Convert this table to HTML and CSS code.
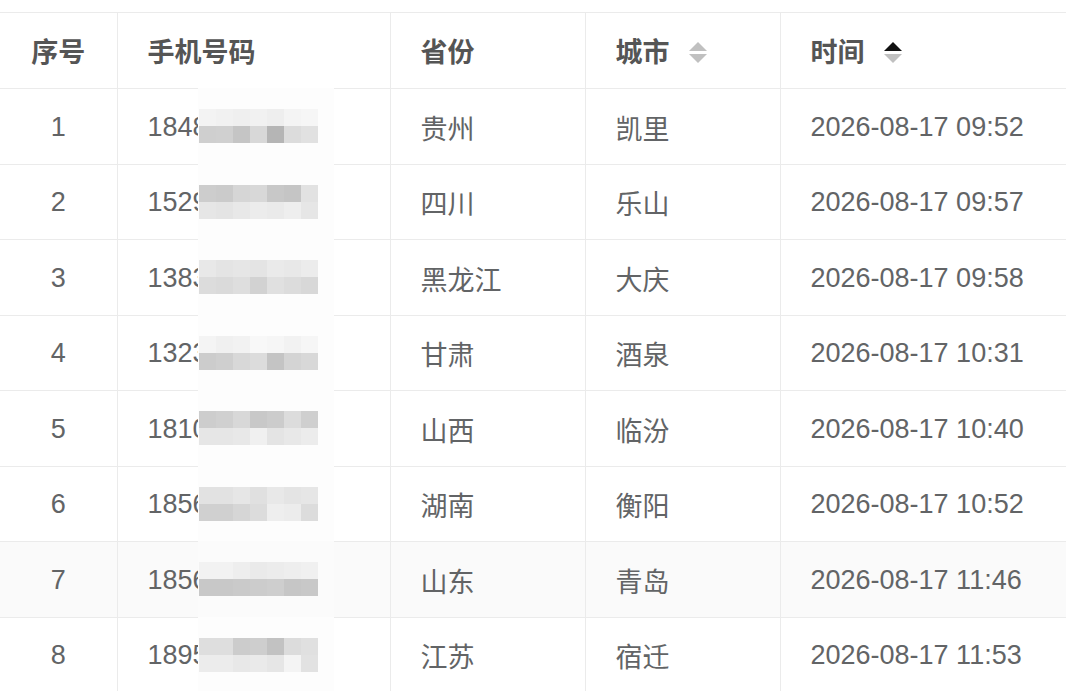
FILE: index.html
```html
<!DOCTYPE html>
<html lang="zh-CN">
<head>
<meta charset="utf-8">
<title>列表</title>
<link rel="stylesheet" href="styles.css">
</head>
<body>
<div class="wrap">
<table class="grid">
  <colgroup>
    <col class="c-idx"><col class="c-phone"><col class="c-prov"><col class="c-city"><col class="c-time">
  </colgroup>
  <thead>
    <tr>
      <th class="center">序号</th>
      <th>手机号码</th>
      <th>省份</th>
      <th>城市<span class="sort"><i class="up"></i><i class="down"></i></span></th>
      <th>时间<span class="sort asc"><i class="up"></i><i class="down"></i></span></th>
    </tr>
  </thead>
  <tbody>
    <tr>
      <td class="center">1</td>
      <td class="phone">1848<span class="mask"><span class="mos">
        <b style="background:#f3f3f3"></b><b style="background:#f1f1f1"></b><b style="background:#efefef"></b><b style="background:#f1f1f1"></b><b style="background:#eeeeee"></b><b style="background:#f4f4f4"></b><b style="background:#f6f6f6"></b>
        <b style="background:#cfcfcf"></b><b style="background:#d0d0d0"></b><b style="background:#c5c5c5"></b><b style="background:#d8d8d8"></b><b style="background:#b5b5b5"></b><b style="background:#dcdcdc"></b><b style="background:#e1e1e1"></b>
      </span></span></td>
      <td>贵州</td><td>凯里</td><td>2026-08-17 09:52</td>
    </tr>
    <tr>
      <td class="center">2</td>
      <td class="phone">1529<span class="mask"><span class="mos">
        <b style="background:#cdcdcd"></b><b style="background:#cbcbcb"></b><b style="background:#d6d6d6"></b><b style="background:#d8d8d8"></b><b style="background:#c8c8c8"></b><b style="background:#c5c5c5"></b><b style="background:#e2e2e2"></b>
        <b style="background:#e6e6e6"></b><b style="background:#e4e4e4"></b><b style="background:#e8e8e8"></b><b style="background:#ececec"></b><b style="background:#eaeaea"></b><b style="background:#eeeeee"></b><b style="background:#e6e6e6"></b>
      </span></span></td>
      <td>四川</td><td>乐山</td><td>2026-08-17 09:57</td>
    </tr>
    <tr>
      <td class="center">3</td>
      <td class="phone">1383<span class="mask"><span class="mos">
        <b style="background:#e8e8e8"></b><b style="background:#e4e4e4"></b><b style="background:#e6e6e6"></b><b style="background:#e4e4e4"></b><b style="background:#eaeaea"></b><b style="background:#e8e8e8"></b><b style="background:#ececec"></b>
        <b style="background:#dcdcdc"></b><b style="background:#dadada"></b><b style="background:#dedede"></b><b style="background:#d2d2d2"></b><b style="background:#e0e0e0"></b><b style="background:#dcdcdc"></b><b style="background:#d8d8d8"></b>
      </span></span></td>
      <td>黑龙江</td><td>大庆</td><td>2026-08-17 09:58</td>
    </tr>
    <tr>
      <td class="center">4</td>
      <td class="phone">1323<span class="mask"><span class="mos">
        <b style="background:#f4f4f4"></b><b style="background:#f0f0f0"></b><b style="background:#f2f2f2"></b><b style="background:#f8f8f8"></b><b style="background:#f6f6f6"></b><b style="background:#f2f2f2"></b><b style="background:#f6f6f6"></b>
        <b style="background:#cccccc"></b><b style="background:#cfcfcf"></b><b style="background:#d8d8d8"></b><b style="background:#dcdcdc"></b><b style="background:#c4c4c4"></b><b style="background:#d4d4d4"></b><b style="background:#d8d8d8"></b>
      </span></span></td>
      <td>甘肃</td><td>酒泉</td><td>2026-08-17 10:31</td>
    </tr>
    <tr>
      <td class="center">5</td>
      <td class="phone">1810<span class="mask"><span class="mos">
        <b style="background:#cdcdcd"></b><b style="background:#d0d0d0"></b><b style="background:#d8d8d8"></b><b style="background:#c8c8c8"></b><b style="background:#cccccc"></b><b style="background:#dcdcdc"></b><b style="background:#cfcfcf"></b>
        <b style="background:#e6e6e6"></b><b style="background:#e6e6e6"></b><b style="background:#e8e8e8"></b><b style="background:#f0f0f0"></b><b style="background:#e4e4e4"></b><b style="background:#e8e8e8"></b><b style="background:#ececec"></b>
      </span></span></td>
      <td>山西</td><td>临汾</td><td>2026-08-17 10:40</td>
    </tr>
    <tr>
      <td class="center">6</td>
      <td class="phone">1856<span class="mask"><span class="mos">
        <b style="background:#e2e2e2"></b><b style="background:#e2e2e2"></b><b style="background:#e6e6e6"></b><b style="background:#e0e0e0"></b><b style="background:#e8e8e8"></b><b style="background:#e4e4e4"></b><b style="background:#e6e6e6"></b>
        <b style="background:#d0d0d0"></b><b style="background:#d0d0d0"></b><b style="background:#d6d6d6"></b><b style="background:#dcdcdc"></b><b style="background:#eeeeee"></b><b style="background:#ececec"></b><b style="background:#dcdcdc"></b>
      </span></span></td>
      <td>湖南</td><td>衡阳</td><td>2026-08-17 10:52</td>
    </tr>
    <tr class="hover">
      <td class="center">7</td>
      <td class="phone">1856<span class="mask"><span class="mos">
        <b style="background:#f2f2f2"></b><b style="background:#f2f2f2"></b><b style="background:#eeeeee"></b><b style="background:#eaeaea"></b><b style="background:#ececec"></b><b style="background:#eeeeee"></b><b style="background:#f0f0f0"></b>
        <b style="background:#c8c8c8"></b><b style="background:#c8c8c8"></b><b style="background:#cacaca"></b><b style="background:#cccccc"></b><b style="background:#cecece"></b><b style="background:#c6c6c6"></b><b style="background:#c8c8c8"></b>
      </span></span></td>
      <td>山东</td><td>青岛</td><td>2026-08-17 11:46</td>
    </tr>
    <tr>
      <td class="center">8</td>
      <td class="phone">1895<span class="mask"><span class="mos">
        <b style="background:#dedede"></b><b style="background:#dedede"></b><b style="background:#cccccc"></b><b style="background:#cecece"></b><b style="background:#c2c2c2"></b><b style="background:#dcdcdc"></b><b style="background:#e0e0e0"></b>
        <b style="background:#ececec"></b><b style="background:#ececec"></b><b style="background:#e8e8e8"></b><b style="background:#eaeaea"></b><b style="background:#e6e6e6"></b><b style="background:#f4f4f4"></b><b style="background:#e2e2e2"></b>
      </span></span></td>
      <td>江苏</td><td>宿迁</td><td>2026-08-17 11:53</td>
    </tr>
  </tbody>
</table>
</div>
</body>
</html>
```

FILE: styles.css
```css
html, body {
  margin: 0;
  padding: 0;
  background: #fff;
  overflow: hidden;
}
.wrap {
  padding-top: 12px;
  width: 1066px;
  overflow: hidden;
}
.grid {
  border-collapse: collapse;
  table-layout: fixed;
  width: 1090px;
  font-family: "Liberation Sans", "Noto Sans CJK SC", sans-serif;
  font-size: 27px;
  color: #626466;
}
.c-idx { width: 117px; }
.c-phone { width: 273px; }
.c-prov { width: 195px; }
.c-city { width: 195px; }
.c-time { width: 310px; }

.grid th, .grid td {
  text-align: left;
  padding: 0 0 0 30px;
  border-bottom: 1px solid #ebebeb;
  border-right: 1px solid #ebebeb;
  white-space: nowrap;
  vertical-align: middle;
}
.grid th {
  border-top: 1px solid #ebebeb;
  font-weight: bold;
  color: #555;
  height: 75px;
}
.grid td { height: 72.5px; padding-top: 2px; }
.grid .center { text-align: center; padding: 2px 0 0; }
.grid th.center { padding: 0; }
.grid tr.hover td { background: #fafafa; }

.sort {
  display: inline-flex;
  flex-direction: column;
  gap: 3px;
  margin-left: 19px;
  vertical-align: middle;
  position: relative;
  top: -2px;
}
.sort i {
  display: block;
  width: 0;
  height: 0;
  border-left: 9px solid transparent;
  border-right: 9px solid transparent;
}
.sort .up { border-bottom: 9px solid #c0c0c0; }
.sort .down { border-top: 9px solid #c0c0c0; }
.sort.asc .up { border-bottom-color: #111; }

.phone { position: relative; }
.mask {
  position: absolute;
  left: 80px;
  top: -1px;
  bottom: -1px;
  width: 136px;
  background: #fdfdfd;
  display: flex;
  align-items: center;
}
.hover .mask { background: #fbfbfb; }
.mos {
  display: grid;
  grid-template-columns: 17px 17px 17px 17px 17px 17px 17px;
  grid-template-rows: 17px 17px;
  margin-left: 1px;
}
.mos b { display: block; }
```
